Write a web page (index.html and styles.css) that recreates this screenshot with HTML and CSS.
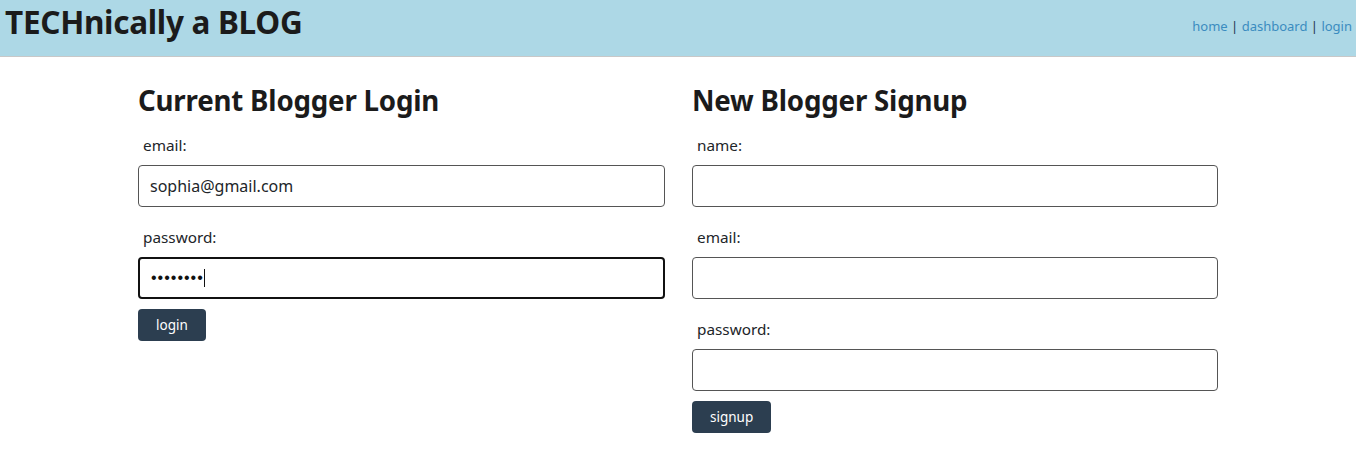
FILE: index.html
```html
<!DOCTYPE html>
<html lang="en">
<head>
<meta charset="utf-8">
<title>TECHnically a BLOG</title>
<link rel="stylesheet" href="styles.css">
</head>
<body>
<header class="site-header">
  <h1 class="brand">TECHnically a BLOG</h1>
  <nav class="nav">
    <a href="#">home</a> | <a href="#">dashboard</a> | <a href="#">login</a>
  </nav>
</header>
<main class="forms">
  <section class="panel">
    <h2 class="panel-title">Current Blogger Login</h2>
    <form class="form">
      <label class="label" for="login-email">email:</label>
      <input class="input" id="login-email" type="text" value="sophia@gmail.com">
      <label class="label" for="login-pass">password:</label>
      <div class="input input-focus"><span class="dots">••••••••</span><span class="caret"></span></div>
      <button class="btn" type="button">login</button>
    </form>
  </section>
  <section class="panel">
    <h2 class="panel-title">New Blogger Signup</h2>
    <form class="form">
      <label class="label" for="su-name">name:</label>
      <input class="input" id="su-name" type="text">
      <label class="label" for="su-email">email:</label>
      <input class="input" id="su-email" type="text">
      <label class="label" for="su-pass">password:</label>
      <input class="input input-last" id="su-pass" type="password">
      <button class="btn" type="button">signup</button>
    </form>
  </section>
</main>
</body>
</html>
```

FILE: styles.css
```css
* { box-sizing: border-box; }
body {
  margin: 0;
  font-family: "Noto Sans", "Open Sans", sans-serif;
  color: #212529;
  background: #fff;
}
.site-header {
  display: flex;
  justify-content: space-between;
  align-items: flex-start;
  height: 57px;
  background: #add8e6;
  border-bottom: 1px solid #c8c8c8;
  padding: 0 4px 0 5px;
}
.brand {
  margin: 1px 0 0;
  font-size: 31.5px;
  font-weight: 700;
  line-height: 42px;
  color: #1b1b1b;
  letter-spacing: -0.3px;
}
.nav {
  margin-top: 15px;
  font-size: 13px;
  line-height: 22px;
  color: #1a3550;
}
.nav a {
  color: #3b8cc0;
  text-decoration: none;
}
.forms {
  width: 1080px;
  margin: 0 auto;
  display: grid;
  grid-template-columns: 527px 526px;
  column-gap: 27px;
  padding-top: 25px;
}
.panel-title {
  margin: 0 0 17px;
  font-size: 27.7px;
  font-weight: 700;
  line-height: 36px;
  color: #1b1b1b;
  letter-spacing: -0.2px;
}
.form {
  display: flex;
  flex-direction: column;
  align-items: flex-start;
}
.label {
  font-size: 15.3px;
  line-height: 20px;
  padding-left: 5px;
  margin-bottom: 10px;
  color: #212529;
}
.input {
  width: 100%;
  height: 42px;
  border: 1px solid #555;
  border-radius: 4px;
  padding: 0 11px;
  font-family: inherit;
  font-size: 16px;
  color: #212529;
  margin-bottom: 20px;
  background: #fff;
  outline: none;
}
.input-focus {
  display: flex;
  align-items: center;
  border: 2px solid #111;
  margin-bottom: 10px;
}
.input-last { margin-bottom: 10px; }
.dots {
  font-family: "Liberation Sans", Arial, sans-serif;
  font-size: 16px;
  letter-spacing: 1px;
  color: #111;
}
.caret {
  display: inline-block;
  width: 1px;
  height: 18px;
  background: #111;
  margin-left: 0;
}
.btn {
  height: 32px;
  padding: 0 18px;
  border: none;
  border-radius: 4px;
  background: #2c3e50;
  color: #fff;
  font-family: inherit;
  font-size: 13.5px;
}
```
